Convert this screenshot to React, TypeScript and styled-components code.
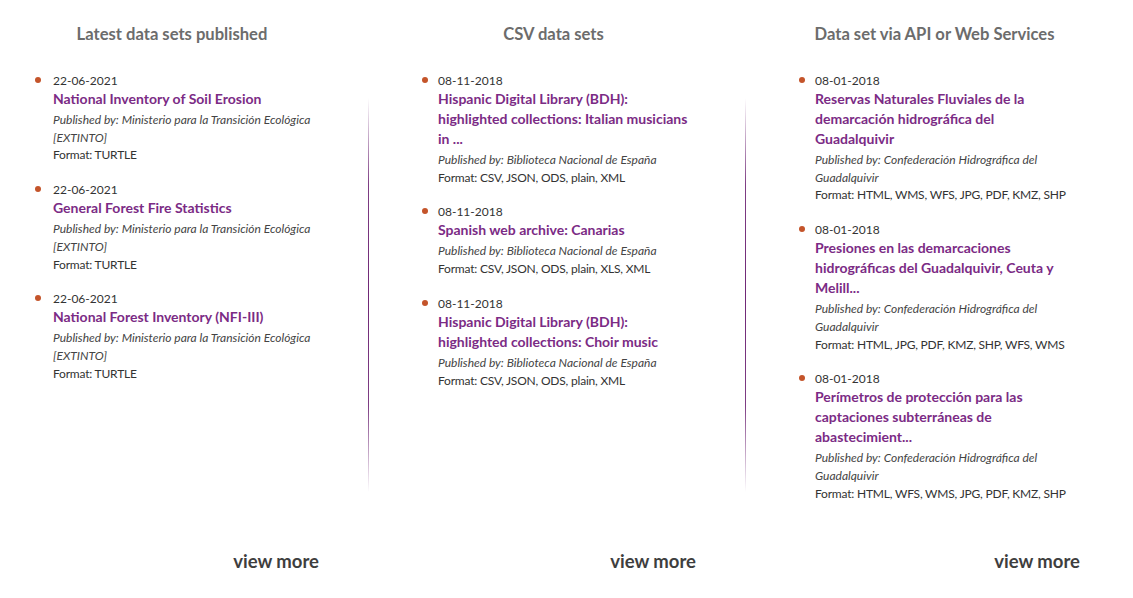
import React from "react";
import styled, { createGlobalStyle } from "styled-components";

const Global = createGlobalStyle`
  html, body { margin: 0; padding: 0; background: #fff; }
  body { font-family: Lato, "Open Sans", "Liberation Sans", sans-serif; }
`;

const Page = styled.div`
  box-sizing: border-box;
  height: 598px;
  padding: 24px 0 26px;
`;

const Grid = styled.div`
  display: grid;
  grid-template-columns: 368px 1px 376px 1px 1fr;
  height: 100%;
`;

const Divider = styled.div`
  margin-top: 74px;
  height: 394px;
  background: linear-gradient(
    to bottom,
    rgba(112, 40, 118, 0) 0%,
    rgba(112, 40, 118, 0.9) 22%,
    rgba(112, 40, 118, 1) 50%,
    rgba(112, 40, 118, 0.9) 78%,
    rgba(112, 40, 118, 0) 100%
  );
`;

const Column = styled.section`
  display: flex;
  flex-direction: column;
  min-width: 0;
`;

const Heading = styled.h2<{ $offset: number }>`
  margin: 0;
  padding-right: ${(p) => p.$offset}px;
  text-align: center;
  font-size: 16.6px;
  line-height: 20px;
  font-weight: 700;
  color: #6c6c6c;
`;

const List = styled.ul<{ $left: number; $right: number }>`
  list-style: none;
  margin: 28px 0 0;
  padding: 0 ${(p) => p.$right}px 0 ${(p) => p.$left}px;
  display: flex;
  flex-direction: column;
  gap: 17px;
`;

const Item = styled.li`
  display: flex;
  align-items: flex-start;
`;

const Dot = styled.span<{ $gap: number }>`
  flex: none;
  width: 6px;
  height: 6px;
  border-radius: 50%;
  background: #c4542a;
  margin: 5px ${(p) => p.$gap}px 0 -${(p) => p.$gap + 6}px;
`;

const Body = styled.div`
  min-width: 0;
`;

const DateLine = styled.div`
  font-size: 12px;
  line-height: 17px;
  color: #333;
`;

const Title = styled.a`
  display: block;
  font-size: 14px;
  line-height: 20px;
  font-weight: 700;
  color: #7b2b85;
  text-decoration: none;
`;

const Publisher = styled.div`
  margin-top: 2px;
  font-size: 12px;
  line-height: 17.7px;
  font-style: italic;
  color: #444;
`;

const Format = styled.div`
  font-size: 12px;
  line-height: 17.7px;
  color: #333;
  letter-spacing: -0.2px;
`;

const Footer = styled.div<{ $right: number }>`
  margin-top: auto;
  padding-right: ${(p) => p.$right}px;
  text-align: right;
`;

const More = styled.a`
  font-size: 18.5px;
  line-height: 22px;
  font-weight: 700;
  color: #3e3e3e;
  text-decoration: none;
`;

type Entry = { date: string; title: string; publisher: string; format: string };

const cols: {
  heading: string;
  offset: number;
  left: number;
  right: number;
  gap: number;
  moreRight: number;
  items: Entry[];
}[] = [
  {
    heading: "Latest data sets published",
    offset: 24,
    left: 53,
    right: 22,
    gap: 12,
    moreRight: 49,
    items: [
      {
        date: "22-06-2021",
        title: "National Inventory of Soil Erosion",
        publisher: "Ministerio para la Transición Ecológica [EXTINTO]",
        format: "TURTLE",
      },
      {
        date: "22-06-2021",
        title: "General Forest Fire Statistics",
        publisher: "Ministerio para la Transición Ecológica [EXTINTO]",
        format: "TURTLE",
      },
      {
        date: "22-06-2021",
        title: "National Forest Inventory (NFI-III)",
        publisher: "Ministerio para la Transición Ecológica [EXTINTO]",
        format: "TURTLE",
      },
    ],
  },
  {
    heading: "CSV data sets",
    offset: 7,
    left: 69,
    right: 47,
    gap: 10,
    moreRight: 49,
    items: [
      {
        date: "08-11-2018",
        title: "Hispanic Digital Library (BDH): highlighted collections: Italian musicians in ...",
        publisher: "Biblioteca Nacional de España",
        format: "CSV, JSON, ODS, plain, XML",
      },
      {
        date: "08-11-2018",
        title: "Spanish web archive: Canarias",
        publisher: "Biblioteca Nacional de España",
        format: "CSV, JSON, ODS, plain, XLS, XML",
      },
      {
        date: "08-11-2018",
        title: "Hispanic Digital Library (BDH): highlighted collections: Choir music",
        publisher: "Biblioteca Nacional de España",
        format: "CSV, JSON, ODS, plain, XML",
      },
    ],
  },
  {
    heading: "Data set via API or Web Services",
    offset: 10,
    left: 69,
    right: 58,
    gap: 10,
    moreRight: 53,
    items: [
      {
        date: "08-01-2018",
        title: "Reservas Naturales Fluviales de la demarcación hidrográfica del Guadalquivir",
        publisher: "Confederación Hidrográfica del Guadalquivir",
        format: "HTML, WMS, WFS, JPG, PDF, KMZ, SHP",
      },
      {
        date: "08-01-2018",
        title: "Presiones en las demarcaciones hidrográficas del Guadalquivir, Ceuta y Melill...",
        publisher: "Confederación Hidrográfica del Guadalquivir",
        format: "HTML, JPG, PDF, KMZ, SHP, WFS, WMS",
      },
      {
        date: "08-01-2018",
        title: "Perímetros de protección para las captaciones subterráneas de abastecimient...",
        publisher: "Confederación Hidrográfica del Guadalquivir",
        format: "HTML, WFS, WMS, JPG, PDF, KMZ, SHP",
      },
    ],
  },
];

export default function App() {
  const parts: React.ReactNode[] = [];
  cols.forEach((c, i) => {
    if (i > 0) parts.push(<Divider key={`d${i}`} />);
    parts.push(
      <Column key={c.heading}>
        <Heading $offset={c.offset}>{c.heading}</Heading>
        <List $left={c.left} $right={c.right}>
          {c.items.map((it, j) => (
            <Item key={j}>
              <Dot $gap={c.gap} />
              <Body>
                <DateLine>{it.date}</DateLine>
                <Title href="#">{it.title}</Title>
                <Publisher>{`Published by: ${it.publisher}`}</Publisher>
                <Format>{`Format: ${it.format}`}</Format>
              </Body>
            </Item>
          ))}
        </List>
        <Footer $right={c.moreRight}>
          <More href="#">view more</More>
        </Footer>
      </Column>
    );
  });
  return (
    <>
      <Global />
      <Page>
        <Grid>{parts}</Grid>
      </Page>
    </>
  );
}
